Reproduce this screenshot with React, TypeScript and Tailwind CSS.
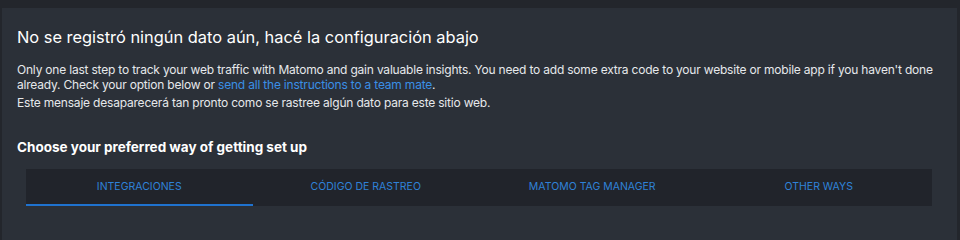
import { useState } from 'react';

const tabs = ['Integraciones', 'Código de rastreo', 'Matomo Tag Manager', 'Other ways'];

export default function App() {
    const [active, setActive] = useState(0);

    return (
        <div className="h-screen flex flex-col bg-[#23262c] pt-2 pl-[2px] pr-[3px] font-['Inter',sans-serif] text-[#e6e8eb]">
            <div className="flex-1 bg-[#2b3038] px-[15px] pt-[19px]">
                <h2 className="text-[16.4px] leading-[20px] text-white">
                    No se registró ningún dato aún, hacé la configuración abajo
                </h2>
                <p className="mt-[15px] text-[12px] leading-[15px] tracking-[-0.2px]">
                    Only one last step to track your web traffic with Matomo and gain valuable insights. You need to add some
                    extra code to your website or mobile app if you haven't done already. Check your option below or{' '}
                    <a href="#" className="text-[#3a8fe6]">send all the instructions to a team mate</a>.
                </p>
                <p className="mt-[3px] text-[12px] leading-[15px] tracking-[-0.2px]">
                    Este mensaje desaparecerá tan pronto como se rastree algún dato para este sitio web.
                </p>

                <h3 className="mt-[28px] text-[13.5px] leading-[18px] font-bold text-white">
                    Choose your preferred way of getting set up
                </h3>

                <div className="mt-[13px] ml-[9px] mr-[10px] flex bg-[#21242b]">
                    {tabs.map((t, i) => (
                        <button
                            key={t}
                            onClick={() => setActive(i)}
                            className={
                                'flex-1 h-[37px] uppercase text-[10.5px] text-[#2f82d8] border-b-2 ' +
                                (i === active ? 'border-[#1f72cf]' : 'border-transparent')
                            }
                        >
                            {t}
                        </button>
                    ))}
                </div>
            </div>
        </div>
    );
}
